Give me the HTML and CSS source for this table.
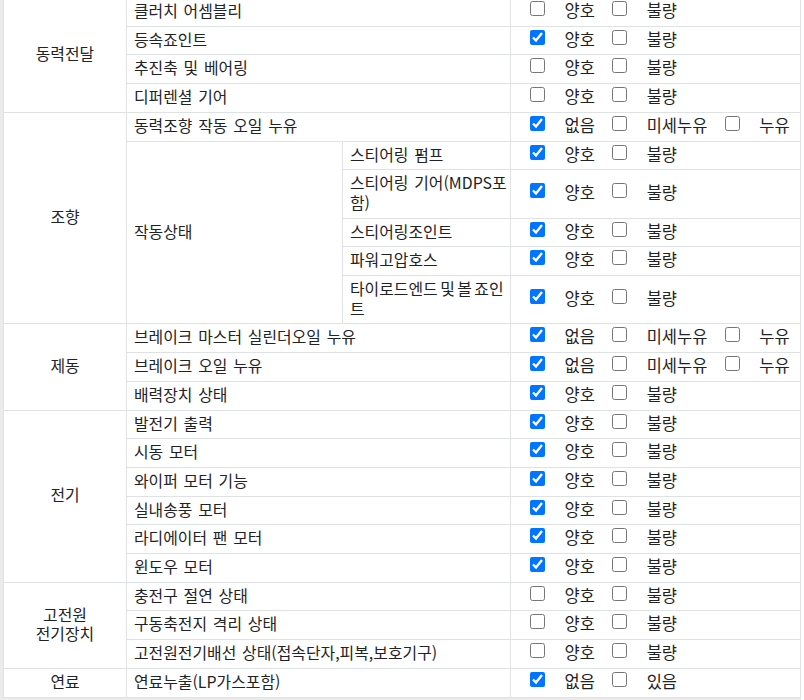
FILE: index.html
```html
<!DOCTYPE html>
<html lang="ko">
<head>
<meta charset="utf-8">
<title>점검표</title>
<link rel="stylesheet" href="styles.css">
</head>
<body>
<div class="frame">
<div class="sheet">
<table class="check">
<colgroup>
<col class="c1"><col class="c2"><col class="c3"><col class="c4">
</colgroup>
<tbody>
<tr><th rowspan="4">동력전달</th><td colspan="2">클러치 어셈블리</td>
<td class="opts"><div class="optrow"><label class="opt"><input type="checkbox"><span>양호</span></label><label class="opt"><input type="checkbox"><span>불량</span></label></div></td></tr>
<tr><td colspan="2">등속죠인트</td>
<td class="opts"><div class="optrow"><label class="opt"><input type="checkbox" checked><span>양호</span></label><label class="opt"><input type="checkbox"><span>불량</span></label></div></td></tr>
<tr><td colspan="2">추진축 및 베어링</td>
<td class="opts"><div class="optrow"><label class="opt"><input type="checkbox"><span>양호</span></label><label class="opt"><input type="checkbox"><span>불량</span></label></div></td></tr>
<tr><td colspan="2">디퍼렌셜 기어</td>
<td class="opts"><div class="optrow"><label class="opt"><input type="checkbox"><span>양호</span></label><label class="opt"><input type="checkbox"><span>불량</span></label></div></td></tr>

<tr><th rowspan="6">조향</th><td colspan="2">동력조향 작동 오일 누유</td>
<td class="opts"><div class="optrow"><label class="opt"><input type="checkbox" checked><span>없음</span></label><label class="opt"><input type="checkbox"><span>미세누유</span></label><label class="opt"><input type="checkbox"><span>누유</span></label></div></td></tr>
<tr><td rowspan="5">작동상태</td><td class="sub">스티어링 펌프</td>
<td class="opts"><div class="optrow"><label class="opt"><input type="checkbox" checked><span>양호</span></label><label class="opt"><input type="checkbox"><span>불량</span></label></div></td></tr>
<tr><td class="sub">스티어링 기어(MDPS포함)</td>
<td class="opts"><div class="optrow"><label class="opt"><input type="checkbox" checked><span>양호</span></label><label class="opt"><input type="checkbox"><span>불량</span></label></div></td></tr>
<tr><td class="sub">스티어링조인트</td>
<td class="opts"><div class="optrow"><label class="opt"><input type="checkbox" checked><span>양호</span></label><label class="opt"><input type="checkbox"><span>불량</span></label></div></td></tr>
<tr><td class="sub">파워고압호스</td>
<td class="opts"><div class="optrow"><label class="opt"><input type="checkbox" checked><span>양호</span></label><label class="opt"><input type="checkbox"><span>불량</span></label></div></td></tr>
<tr><td class="sub tight">타이로드엔드 및 볼 죠인트</td>
<td class="opts"><div class="optrow"><label class="opt"><input type="checkbox" checked><span>양호</span></label><label class="opt"><input type="checkbox"><span>불량</span></label></div></td></tr>

<tr><th rowspan="3">제동</th><td colspan="2">브레이크 마스터 실린더오일 누유</td>
<td class="opts"><div class="optrow"><label class="opt"><input type="checkbox" checked><span>없음</span></label><label class="opt"><input type="checkbox"><span>미세누유</span></label><label class="opt"><input type="checkbox"><span>누유</span></label></div></td></tr>
<tr><td colspan="2">브레이크 오일 누유</td>
<td class="opts"><div class="optrow"><label class="opt"><input type="checkbox" checked><span>없음</span></label><label class="opt"><input type="checkbox"><span>미세누유</span></label><label class="opt"><input type="checkbox"><span>누유</span></label></div></td></tr>
<tr><td colspan="2">배력장치 상태</td>
<td class="opts"><div class="optrow"><label class="opt"><input type="checkbox" checked><span>양호</span></label><label class="opt"><input type="checkbox"><span>불량</span></label></div></td></tr>

<tr><th rowspan="6">전기</th><td colspan="2">발전기 출력</td>
<td class="opts"><div class="optrow"><label class="opt"><input type="checkbox" checked><span>양호</span></label><label class="opt"><input type="checkbox"><span>불량</span></label></div></td></tr>
<tr><td colspan="2">시동 모터</td>
<td class="opts"><div class="optrow"><label class="opt"><input type="checkbox" checked><span>양호</span></label><label class="opt"><input type="checkbox"><span>불량</span></label></div></td></tr>
<tr><td colspan="2">와이퍼 모터 기능</td>
<td class="opts"><div class="optrow"><label class="opt"><input type="checkbox" checked><span>양호</span></label><label class="opt"><input type="checkbox"><span>불량</span></label></div></td></tr>
<tr><td colspan="2">실내송풍 모터</td>
<td class="opts"><div class="optrow"><label class="opt"><input type="checkbox" checked><span>양호</span></label><label class="opt"><input type="checkbox"><span>불량</span></label></div></td></tr>
<tr><td colspan="2">라디에이터 팬 모터</td>
<td class="opts"><div class="optrow"><label class="opt"><input type="checkbox" checked><span>양호</span></label><label class="opt"><input type="checkbox"><span>불량</span></label></div></td></tr>
<tr><td colspan="2">윈도우 모터</td>
<td class="opts"><div class="optrow"><label class="opt"><input type="checkbox" checked><span>양호</span></label><label class="opt"><input type="checkbox"><span>불량</span></label></div></td></tr>

<tr><th rowspan="3">고전원<br>전기장치</th><td colspan="2">충전구 절연 상태</td>
<td class="opts"><div class="optrow"><label class="opt"><input type="checkbox"><span>양호</span></label><label class="opt"><input type="checkbox"><span>불량</span></label></div></td></tr>
<tr><td colspan="2">구동축전지 격리 상태</td>
<td class="opts"><div class="optrow"><label class="opt"><input type="checkbox"><span>양호</span></label><label class="opt"><input type="checkbox"><span>불량</span></label></div></td></tr>
<tr><td colspan="2">고전원전기배선 상태(접속단자,피복,보호기구)</td>
<td class="opts"><div class="optrow"><label class="opt"><input type="checkbox"><span>양호</span></label><label class="opt"><input type="checkbox"><span>불량</span></label></div></td></tr>

<tr><th>연료</th><td colspan="2">연료누출(LP가스포함)</td>
<td class="opts"><div class="optrow"><label class="opt"><input type="checkbox" checked><span>없음</span></label><label class="opt"><input type="checkbox"><span>있음</span></label></div></td></tr>
</tbody>
</table>
</div>
</div>
</body>
</html>
```

FILE: styles.css
```css
html, body {
  margin: 0;
  padding: 0;
  background: #ffffff;
}

body {
  font-family: "Noto Sans CJK KR", "Noto Sans", sans-serif;
  font-size: 15.9px;
  line-height: 19.7px;
  word-spacing: 1.3px;
  color: #1f2326;
}

.frame {
  width: 798px;
  margin-top: -3px;
  padding: 0 0 3px 3px;
  background: #ebebeb;
}

.sheet {
  border-left: 1px solid #d4d4d4;
  background: #ffffff;
}

.check {
  width: 797px;
  table-layout: fixed;
  border-collapse: collapse;
  margin-left: -1px;
}

.c1 { width: 123px; }
.c2 { width: 216px; }
.c3 { width: 168px; }
.c4 { width: 290px; }

.check th,
.check td {
  border: 1px solid #dee2e6;
  padding: 3px 7px 5px;
  vertical-align: middle;
  text-align: left;
  font-weight: 400;
}

.check th {
  text-align: center;
}

.check td.sub {
  padding-right: 3px;
}

.check td.tight {
  word-spacing: -2px;
}

.check td.opts {
  padding-left: 19px;
  word-spacing: 0;
  font-size: 16.5px;
}

.optrow {
  display: flex;
  align-items: flex-start;
  height: 19.7px;
  white-space: nowrap;
}

.opt {
  display: flex;
  align-items: flex-start;
  margin-right: 17.3px;
}

.opt input {
  flex: none;
  width: 15px;
  height: 15px;
  margin: 0 19.5px 0 0;
}

.opt span {
  display: block;
  line-height: 19.7px;
}
```
